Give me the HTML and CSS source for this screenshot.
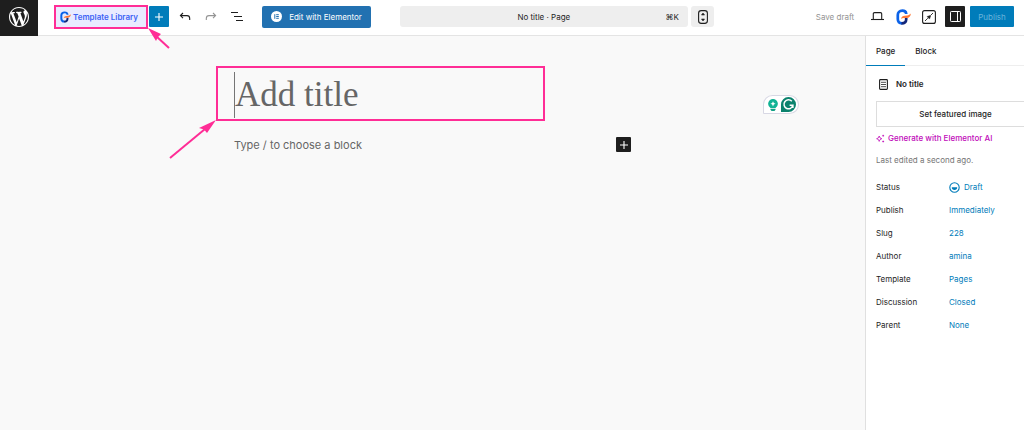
FILE: index.html
```html
<!DOCTYPE html>
<html lang="en">
<head>
<meta charset="utf-8">
<title>No title · Page</title>
<meta name="viewport" content="width=device-width, initial-scale=1">
<link rel="stylesheet" href="styles.css">
</head>
<body>
<div class="app">
  <header class="topbar">
    <a class="wp-logo" href="#" aria-label="View pages">
      <svg width="20" height="20" viewBox="0 0 20 20" fill="#fff"><path d="M20 10c0-5.51-4.49-10-10-10C4.48 0 0 4.49 0 10c0 5.52 4.48 10 10 10 5.51 0 10-4.48 10-10zM7.78 15.37L4.37 6.22c.55-.02 1.17-.08 1.17-.08.5-.06.44-1.13-.06-1.11 0 0-1.45.11-2.37.11-.18 0-.37 0-.58-.01C4.12 2.69 6.87 1.11 10 1.11c2.33 0 4.45.87 6.05 2.34-.68-.11-1.65.39-1.65 1.58 0 .74.45 1.36.9 2.1.35.61.55 1.36.55 2.46 0 1.49-1.4 5-1.4 5l-3.03-8.37c.54-.02.82-.17.82-.17.5-.05.44-1.25-.06-1.22 0 0-1.44.12-2.38.12-.87 0-2.33-.12-2.33-.12-.5-.03-.56 1.2-.06 1.22l.92.08 1.26 3.41zM17.41 10c.24-.64.74-1.87.43-4.25.7 1.29 1.05 2.71 1.05 4.25 0 3.29-1.73 6.24-4.4 7.78.97-2.59 1.94-5.2 2.92-7.78zM6.1 18.09C3.12 16.65 1.11 13.53 1.11 10c0-1.3.23-2.48.72-3.59C3.25 10.3 4.67 14.2 6.1 18.09zm4.03-6.63l2.58 6.98c-.86.29-1.76.45-2.71.45-.79 0-1.57-.11-2.29-.33.81-2.38 1.62-4.74 2.42-7.1z"/></svg>
    </a>
    <div class="tools">
      <button class="template-btn" type="button">
        <svg width="11" height="12" viewBox="0 0 15 16" fill="none"><path d="M10.2 5V4.600C10 2.700 8.400 1.700 6.300 1.700 3.400 1.700 1.800 3.400 1.800 6v4c0 2.600 1.600 4.300 4.300 4.300" stroke="#0b62e8" stroke-width="2.700"/><path d="M5.500 14.300c3 .1 4.700-1.200 4.700-3.800V9" stroke="#13277a" stroke-width="2.700"/><path d="M5 9.800C5.500 7.700 6.900 6.900 8.600 6.700l2.700-.3c1.300-.2 2.400-.9 3.600-2-.3 3-1.900 4.400-4 4.600l-3 .1c-1.100 0-2 .2-2.900.7z" fill="#ff7a37"/></svg>
        <span>Template Library</span>
        <svg class="arrow arrow-template" width="24" height="24" viewBox="0 0 24 24"><path d="M21 20 8 8" stroke="#ff2d96" stroke-width="2"/><path d="M0 0 13 6 10 9 8 13z" fill="#ff2d96"/></svg>
      </button>
      <button class="add-btn" type="button" aria-label="Block inserter"><svg width="8" height="8" viewBox="0 0 8 8" stroke="#fff" stroke-width="1.1"><path d="M4 0v8M0 4h8"/></svg></button>
      <button class="icon-btn" type="button" aria-label="Undo"><svg width="12" height="10" viewBox="0 0 12 10" fill="none" stroke="#1e1e1e" stroke-width="1.1"><path d="M4 1 1.4 3.6 4 6.2M1.5 3.6H8c1.8 0 2.7 1 2.7 2.8V8"/></svg></button>
      <button class="icon-btn" type="button" aria-label="Redo" disabled><svg width="12" height="10" viewBox="0 0 12 10" fill="none" stroke="#949494" stroke-width="1.1"><path d="m8 1 2.6 2.6L8 6.2M10.5 3.6H4c-1.8 0-2.7 1-2.7 2.8V8"/></svg></button>
      <button class="icon-btn" type="button" aria-label="Document overview"><svg width="12" height="9" viewBox="0 0 12 9" fill="none" stroke="#1e1e1e" stroke-width="1"><path d="M0 .5h7M3 4.500h8M5 8.500h7"/></svg></button>
      <button class="elementor-btn" type="button">
        <svg width="11" height="11" viewBox="0 0 11 11"><circle cx="5.5" cy="5.5" r="5.5" fill="#fff"/><path d="M3.8 3.2v4.6M5.2 3.7h2.6M5.2 5.5h2.6M5.2 7.3h2.6" stroke="#2271b1"/></svg>
        <span>Edit with Elementor</span>
      </button>
    </div>
    <div class="command-area">
      <button class="command" type="button"><span class="command-title">No title · Page</span><kbd>⌘K</kbd></button>
      <button class="scroll-btn" type="button" aria-label="Page navigation"><svg width="10" height="14" viewBox="0 0 10 14" fill="none" stroke="#1e1e1e"><rect x=".6" y=".6" width="8.8" height="12.8" rx="2.6" stroke-width="1.1"/><path d="m3.500 5 1.500-2 1.500 2zM3.500 9 5 11l1.500-2z" fill="#1e1e1e" stroke-width=".6"/></svg></button>
    </div>
    <div class="actions">
      <button class="save" type="button" disabled>Save draft</button>
      <button class="icon-btn" type="button" aria-label="View"><svg width="13" height="9" viewBox="0 0 13 9" fill="none" stroke="#1e1e1e"><path d="M2.3 7V1.800q0-1.200 1.200-1.200h6q1.200 0 1.200 1.200V7" stroke-width="1.1"/><path d="M0 7.500h13" stroke-width="1.1"/></svg></button>
      <button class="icon-btn" type="button" aria-label="Template kit"><svg width="15" height="16" viewBox="0 0 15 16" fill="none"><path d="M10.2 5V4.600C10 2.700 8.400 1.700 6.300 1.700 3.400 1.700 1.800 3.400 1.800 6v4c0 2.600 1.600 4.300 4.300 4.300" stroke="#0b62e8" stroke-width="2.700"/><path d="M5.500 14.300c3 .1 4.700-1.200 4.700-3.800V9" stroke="#13277a" stroke-width="2.700"/><path d="M5 9.800C5.500 7.700 6.900 6.900 8.600 6.700l2.700-.3c1.300-.2 2.400-.9 3.600-2-.3 3-1.900 4.400-4 4.600l-3 .1c-1.100 0-2 .2-2.900.7z" fill="#ff7a37"/></svg></button>
      <button class="icon-btn" type="button" aria-label="Design settings"><svg width="14" height="14" viewBox="0 0 14 14" fill="none" stroke="#1e1e1e"><rect x=".6" y=".6" width="12.8" height="12.8" rx="2" stroke-width="1.1"/><path d="m3 11 2.800-2.800M8.500 5.500 11 3" stroke-width=".9"/><path d="m5 6.600 3.200-1.200.500.500-1.200 3.200z" fill="#1e1e1e" stroke-width=".4"/></svg></button>
      <button class="settings-btn" type="button" aria-label="Settings" aria-pressed="true"><svg width="11" height="11" viewBox="0 0 11 11" fill="none" stroke="#fff"><rect x=".5" y=".5" width="10" height="10" rx=".8"/><path d="M7.500.5v10"/></svg></button>
      <button class="publish" type="button" disabled>Publish</button>
    </div>
  </header>
  <div class="workspace">
    <main class="canvas">
      <div class="column">
        <div class="title-wrap">
          <input class="title" type="text" placeholder="Add title" aria-label="Add title">
          <div class="title-frame"></div>
          <svg class="arrow arrow-title" width="48" height="40" viewBox="0 0 48 40"><path d="M1 39 36 10" stroke="#ff2d96" stroke-width="2"/><path d="M47 1 38 14 35 10.500 30 9z" fill="#ff2d96"/></svg>
        </div>
        <div class="paragraph">
          <span>Type / to choose a block</span>
          <button class="inline-add" type="button" aria-label="Add block"><svg width="8" height="8" viewBox="0 0 8 8" stroke="#fff" stroke-width="1.1"><path d="M4 0v8M0 4h8"/></svg></button>
        </div>
      </div>
      <div class="writing-badge">
        <svg width="10" height="12" viewBox="0 0 10 12"><path d="M5 0a4.800 4.800 0 0 0-2.500 8.900h5A4.800 4.800 0 0 0 5 0z" fill="#10b294"/><path d="M2.500 9.800h5v.9L6.500 12h-3l-1-1.300z" fill="#10a085"/><path d="M5 2.200 5.800 4l1.800.8-1.800.8L5 7.400l-.8-1.800-1.800-.8L4.200 4z" fill="#fff"/></svg>
        <svg width="15" height="15" viewBox="0 0 15 15"><path d="M7.500 0A7.500 7.500 0 1 1 7.500 15H0V7.500A7.500 7.500 0 0 1 7.500 0z" fill="#0b826d"/><path d="M10.800 4.300A4.500 4.500 0 1 0 11.900 8.200H8.600M11.900 8.200v2.800" fill="none" stroke="#fff" stroke-width="1.500"/></svg>
      </div>
    </main>
    <aside class="sidebar">
      <div class="tabs" role="tablist">
        <button class="tab tab-active" type="button" role="tab" aria-selected="true">Page</button>
        <button class="tab" type="button" role="tab" aria-selected="false">Block</button>
      </div>
      <div class="panel">
        <h2 class="page-name"><svg width="9" height="11" viewBox="0 0 9 11" fill="none" stroke="#1e1e1e"><rect x=".6" y=".6" width="7.800" height="9.800" rx=".8" stroke-width="1.100"/><path d="M2 3.300h5M2 5.500h5M2 7.700h5" stroke-width=".8"/></svg>No title</h2>
        <button class="featured" type="button">Set featured image</button>
        <a class="generate" href="#"><svg width="9" height="9" viewBox="0 0 9 9" fill="none" stroke="#c00bb9" stroke-width=".8"><path d="M3.200 2 4 3.900 5.800 4.700 4 5.500 3.200 7.400 2.400 5.500.6 4.700 2.400 3.900zM7.200.8v1.800M6.300 1.700h1.800M7.200 6.600v1.800M6.300 7.500h1.800"/></svg>Generate with Elementor AI</a>
        <p class="edited">Last edited a second ago.</p>
        <dl class="fields">
          <dt>Status</dt><dd><button class="value" type="button"><svg width="11" height="11" viewBox="0 0 11 11"><circle cx="5.500" cy="5.500" r="4.700" fill="none" stroke="#007cba" stroke-width="1.100"/><path d="M2.800 5.300h5.400a2.700 2.700 0 0 1-5.400 0z" fill="#007cba"/></svg>Draft</button></dd>
          <dt>Publish</dt><dd><button class="value" type="button">Immediately</button></dd>
          <dt>Slug</dt><dd><button class="value" type="button">228</button></dd>
          <dt>Author</dt><dd><button class="value" type="button">amina</button></dd>
          <dt>Template</dt><dd><button class="value" type="button">Pages</button></dd>
          <dt>Discussion</dt><dd><button class="value" type="button">Closed</button></dd>
          <dt>Parent</dt><dd><button class="value" type="button">None</button></dd>
        </dl>
      </div>
    </aside>
  </div>
</div>
</body>
</html>
```
FILE: styles.css
```css
* { box-sizing: border-box; }

body {
  margin: 0;
  color: #1e1e1e;
  background: #f9f9f9;
  font: 8px/12px Inter, "Liberation Sans", sans-serif;
  overflow-x: hidden;
}

button {
  display: flex;
  align-items: center;
  justify-content: center;
  margin: 0;
  padding: 0;
  border: 0;
  color: inherit;
  background: none;
  font: inherit;
  white-space: nowrap;
}

svg { display: block; flex: none; }
a { text-decoration: none; }

.app { display: flex; flex-direction: column; min-height: 100vh; }

.topbar {
  display: flex;
  align-items: center;
  height: 36px;
  padding-right: 10px;
  background: #fff;
  border-bottom: 1px solid #e4e4e4;
}

.wp-logo {
  display: flex;
  align-items: center;
  justify-content: center;
  align-self: stretch;
  width: 38px;
  margin-bottom: -1px;
  padding-bottom: 3px;
  background: #1e1e1e;
}

.tools { display: flex; align-items: center; margin-left: 18px; padding-bottom: 2px; }

.template-btn {
  position: relative;
  justify-content: flex-start;
  gap: 2px;
  width: 90px;
  height: 20px;
  padding-left: 4px;
  color: #3d63f5;
  background: #e9ebff;
  outline: 2px solid #ff2d96;
  font-weight: 600;
}

.add-btn { width: 20px; height: 21px; margin: 0 3px; background: #007cba; border-radius: 1px; }
.icon-btn { width: 26px; height: 20px; }

.elementor-btn {
  gap: 7px;
  width: 109px;
  height: 22px;
  margin-left: 12px;
  color: #fff;
  background: #2271b1;
  border-radius: 2px;
}

.command-area { display: flex; flex: 1; gap: 3px; margin: 0 101px 0 29px; padding-bottom: 2px; }

.command {
  flex: 1;
  height: 21px;
  padding: 0 9px;
  background: #eee;
  border-radius: 3px;
}

.command-title { flex: 1; padding-left: 13px; text-align: center; }
kbd { font: inherit; }

.scroll-btn { width: 23px; height: 21px; background: #eee; border-radius: 3px; }

.actions { display: flex; align-items: center; padding-bottom: 2px; }
.save { width: 40px; margin-right: 9px; color: #949494; }
.settings-btn { width: 20px; height: 21px; margin: 0 5px 0 3px; background: #1e1e1e; border-radius: 1px; }
.publish { width: 44px; height: 21px; color: #69b4dc; background: #007cba; border-radius: 1px; }

.workspace { display: flex; flex: 1; }

.canvas { position: relative; flex: 1; min-width: 0; padding: 36px 20px 20px; }
.column { max-width: 397px; margin: 0 auto; }
.title-wrap { position: relative; }

.title {
  display: block;
  width: 100%;
  height: 46px;
  padding: 0;
  border: 0;
  border-left: 1px solid #757575;
  outline: 0;
  background: none;
  font: 35px/46px "Liberation Serif", serif;
}

.title::placeholder { color: #666; opacity: 1; }

.title-frame {
  position: absolute;
  inset: -6px auto -3px -18px;
  width: 329px;
  border: 2px solid #ff2d96;
  pointer-events: none;
}

.arrow { position: absolute; pointer-events: none; }
.arrow-template { top: 21px; left: 92px; }
.arrow-title { top: 47px; left: -65px; }

.paragraph {
  display: flex;
  align-items: center;
  justify-content: space-between;
  margin-top: 19px;
  color: #666;
  font-size: 11px;
}

.inline-add { width: 15px; height: 15px; background: #1e1e1e; border-radius: 1px; }

.writing-badge {
  position: absolute;
  top: 59px;
  right: 66px;
  display: flex;
  align-items: center;
  gap: 3px;
  padding: 1px 2px 1px 4px;
  border: 1px solid #d8d8e4;
  border-radius: 10px 10px 10px 1px;
  background: #fff;
}

.sidebar { width: 159px; background: #fff; border-left: 1px solid #e0e0e0; overflow: hidden; }
.tabs { display: flex; height: 30px; border-bottom: 1px solid #eee; }
.tab { height: 30px; padding: 0 10px; font-weight: 500; }
.tab-active { border-bottom: 1px solid #007cba; }
.panel { padding: 12px 0 0 10px; }

.page-name {
  display: flex;
  align-items: center;
  gap: 8px;
  margin: 0;
  padding-left: 3px;
  font-size: 8px;
  font-weight: 600;
}

.featured {
  width: 159px;
  height: 26px;
  margin-top: 11px;
  border: 1px solid #ddd;
  font-weight: 500;
}

.generate { display: flex; align-items: center; gap: 3px; margin-top: 5px; color: #c00bb9; font-weight: 500; }
.edited { margin: 10px 0 0; color: #757575; }

.fields {
  display: grid;
  grid-template-columns: 73px 1fr;
  row-gap: 11px;
  margin: 15px 0 0;
}

.fields dd { margin: 0; }
.value { gap: 4px; color: #007cba; }
```
